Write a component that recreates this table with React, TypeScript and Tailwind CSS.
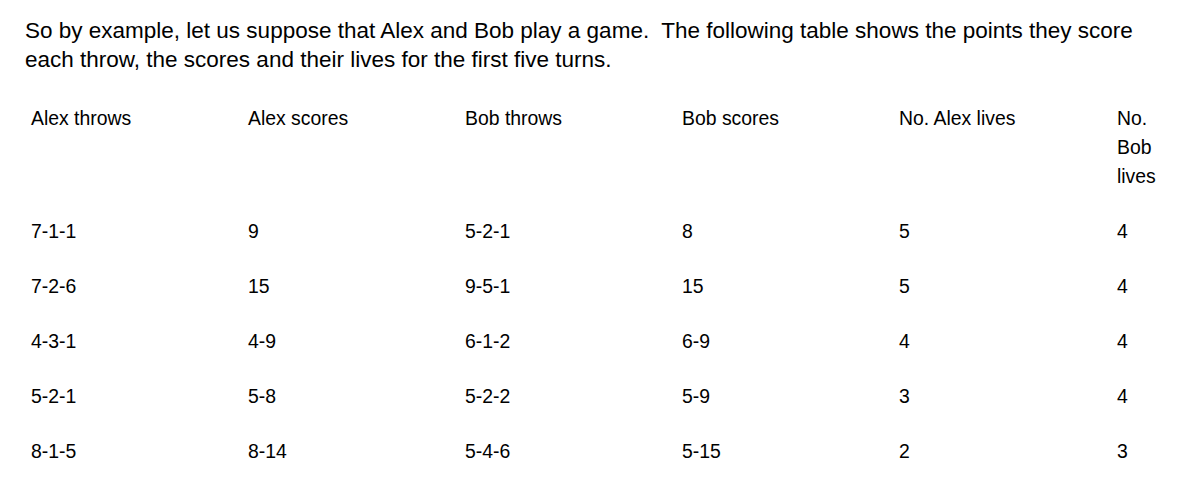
import React from "react";

const headers = ["Alex throws", "Alex scores", "Bob throws", "Bob scores", "No. Alex lives", "No. Bob lives"];
const rows = [
  ["7-1-1", "9", "5-2-1", "8", "5", "4"],
  ["7-2-6", "15", "9-5-1", "15", "5", "4"],
  ["4-3-1", "4-9", "6-1-2", "6-9", "4", "4"],
  ["5-2-1", "5-8", "5-2-2", "5-9", "3", "4"],
  ["8-1-5", "8-14", "5-4-6", "5-15", "2", "3"],
];

export default function App() {
  return (
    <div className="w-[1180px] h-[489px] bg-white text-black overflow-hidden" style={{ fontFamily: '"Liberation Sans", Arial, sans-serif' }}>
      <p className="pl-[25px] pt-[16px] w-[1155px] text-[22.5px] leading-[29px] whitespace-pre-wrap">
        {"So by example, let us suppose that Alex and Bob play a game.  The following table shows the points they score each throw, the scores and their lives for the first five turns."}
      </p>
      <div className="ml-[25px] mt-[17px] grid grid-cols-[217px_217px_217px_217px_218px_56px] text-[19.4px] leading-[29px]">
        {headers.map((h, i) => (
          <div key={i} className="px-[6px] py-[13px]">{h}</div>
        ))}
        {rows.map((r, ri) =>
          r.map((c, ci) => (
            <div key={ri + "-" + ci} className="px-[6px] py-[13px]">{c}</div>
          ))
        )}
      </div>
    </div>
  );
}
